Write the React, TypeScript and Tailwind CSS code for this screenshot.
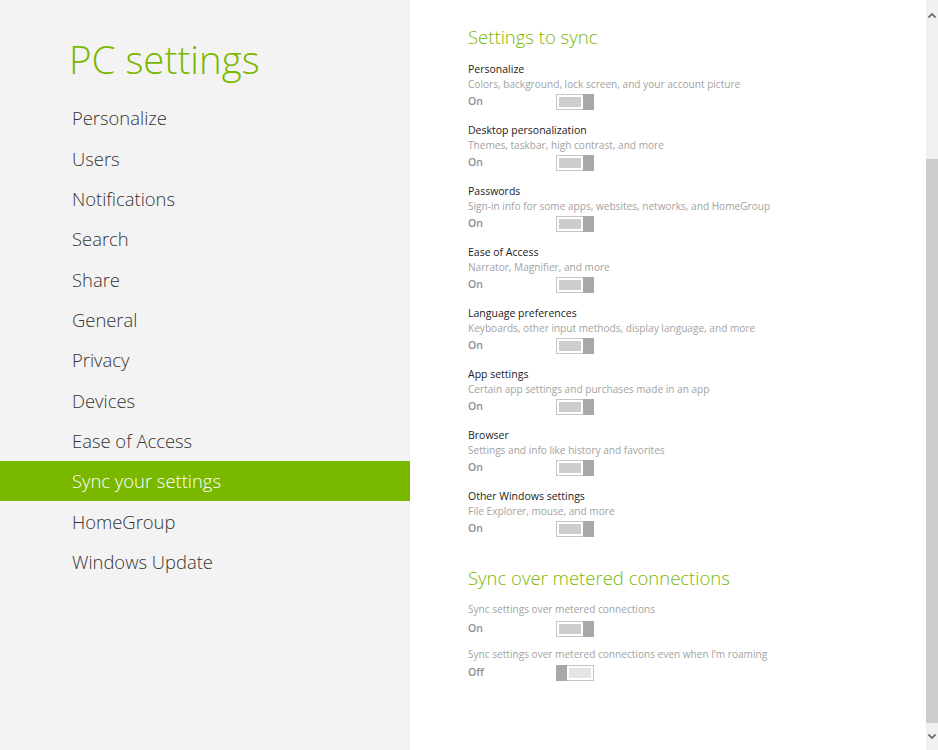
import React from 'react'

const navItems = [
  'Personalize',
  'Users',
  'Notifications',
  'Search',
  'Share',
  'General',
  'Privacy',
  'Devices',
  'Ease of Access',
  'Sync your settings',
  'HomeGroup',
  'Windows Update',
]

const syncItems = [
  { title: 'Personalize', desc: 'Colors, background, lock screen, and your account picture' },
  { title: 'Desktop personalization', desc: 'Themes, taskbar, high contrast, and more' },
  { title: 'Passwords', desc: 'Sign-in info for some apps, websites, networks, and HomeGroup' },
  { title: 'Ease of Access', desc: 'Narrator, Magnifier, and more' },
  { title: 'Language preferences', desc: 'Keyboards, other input methods, display language, and more' },
  { title: 'App settings', desc: 'Certain app settings and purchases made in an app' },
  { title: 'Browser', desc: 'Settings and info like history and favorites' },
  { title: 'Other Windows settings', desc: 'File Explorer, mouse, and more' },
]

const font = { fontFamily: '"Open Sans", "Noto Sans", sans-serif' }

function Toggle({ on }: { on: boolean }) {
  if (on) {
    return (
      <div className="flex h-[16px] w-[38px]">
        <div className="flex-1 border border-r-0 border-[#c6c6c6] bg-white p-[2px]">
          <div className="h-full bg-[#cdcdcd]" />
        </div>
        <div className="w-[11px] bg-[#a8a8a8]" />
      </div>
    )
  }
  return (
    <div className="flex h-[16px] w-[38px]">
      <div className="w-[11px] bg-[#a8a8a8]" />
      <div className="flex-1 border border-l-0 border-[#c6c6c6] bg-white p-[2px]">
        <div className="h-full bg-[#e4e4e4]" />
      </div>
    </div>
  )
}

function ToggleRow({ on }: { on: boolean }) {
  return (
    <div className="flex h-[19px] items-center">
      <span className="w-[88px] text-[10.5px] font-semibold text-[#8e8e8e]">{on ? 'On' : 'Off'}</span>
      <Toggle on={on} />
    </div>
  )
}

function Chevron({ up }: { up: boolean }) {
  return (
    <svg width="8" height="5" viewBox="0 0 8 5" className={up ? '' : 'rotate-180'}>
      <path d="M0.5 4.5 L4 1 L7.5 4.5" fill="none" stroke="#606060" strokeWidth="1.6" />
    </svg>
  )
}

export default function App() {
  return (
    <div className="flex h-[750px] w-full overflow-hidden" style={font}>
      {/* Left navigation */}
      <aside className="w-[410px] shrink-0 bg-[#f3f3f3]">
        <h1 className="pl-[69px] pt-[34px] text-[38.5px] font-light leading-[50px] text-[#7ab800]">PC settings</h1>
        <nav className="mt-[14px]">
          {navItems.map((item) => {
            const active = item === 'Sync your settings'
            return (
              <div
                key={item}
                className={`flex h-[40.33px] items-center pl-[72px] text-[18.4px] font-light ${
                  active ? 'bg-[#7ab800] text-white' : 'text-[#333333]'
                }`}
              >
                {item}
              </div>
            )
          })}
        </nav>
      </aside>

      {/* Content */}
      <main className="flex flex-1 bg-white">
        <div className="flex-1 pl-[58px] pt-[23px]">
          <h2 className="h-[28px] text-[18.5px] leading-[28px] font-light text-[#7ab800]">Settings to sync</h2>
          <div className="mt-[10.5px] flex flex-col gap-[11px]">
            {syncItems.map((item) => (
              <div key={item.title}>
                <p className="text-[10.5px] leading-[15px] text-[#222222]">{item.title}</p>
                <p className="text-[10.1px] leading-[15px] text-[#a3a3a3]">{item.desc}</p>
                <div className="mt-[1px]">
                  <ToggleRow on={true} />
                </div>
              </div>
            ))}
          </div>

          <h2 className="mt-[25.5px] h-[28px] text-[18.5px] leading-[28px] font-light text-[#7ab800]">
            Sync over metered connections
          </h2>
          <p className="mt-[9.5px] text-[10.1px] leading-[15px] text-[#a3a3a3]">Sync settings over metered connections</p>
          <div className="mt-[2.5px]">
            <ToggleRow on={true} />
          </div>
          <p className="mt-[9px] text-[10.1px] leading-[15px] text-[#a3a3a3]">
            Sync settings over metered connections even when I’m roaming
          </p>
          <div className="mt-[1px]">
            <ToggleRow on={false} />
          </div>
        </div>

        {/* Scrollbar */}
        <div className="flex w-[12px] flex-col bg-[#f0f0f0]">
          <div className="flex h-[30px] items-center justify-center">
            <Chevron up={true} />
          </div>
          <div className="h-[129px]" />
          <div className="h-[564px] bg-[#cdcdcd]" />
          <div className="flex flex-1 items-center justify-center">
            <Chevron up={false} />
          </div>
        </div>
      </main>
    </div>
  )
}
